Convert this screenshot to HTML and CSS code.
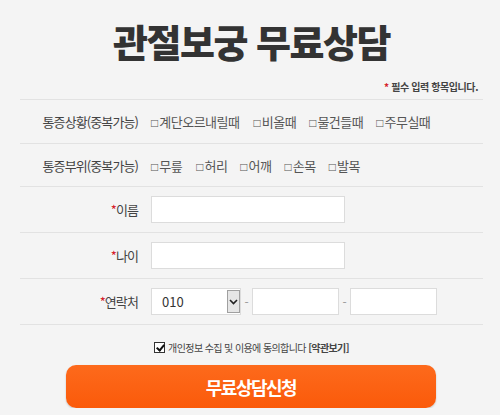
FILE: index.html
```html
<!DOCTYPE html>
<html lang="ko">
<head>
  <meta charset="UTF-8">
  <meta name="viewport" content="width=device-width, initial-scale=1.0">
  <title>관절보궁 무료상담</title>
  <link rel="stylesheet" href="styles.css">
</head>
<body>

<div class="wrap">
  <h1 class="title">관절보궁 무료상담</h1>
  <p class="req"><span class="star">*</span> 필수 입력 항목입니다.</p>

  <div class="form">
    <!-- 체크 항목 -->
    <div class="row check-row">
      <div class="label">통증상황(중복가능)</div>
      <div class="field checks">
        <span class="opt"><span class="box">□</span>계단오르내릴때</span>
        <span class="opt"><span class="box">□</span>비올때</span>
        <span class="opt"><span class="box">□</span>물건들때</span>
        <span class="opt"><span class="box">□</span>주무실때</span>
      </div>
    </div>
    <div class="row check-row">
      <div class="label">통증부위(중복가능)</div>
      <div class="field checks">
        <span class="opt"><span class="box">□</span>무릎</span>
        <span class="opt"><span class="box">□</span>허리</span>
        <span class="opt"><span class="box">□</span>어깨</span>
        <span class="opt"><span class="box">□</span>손목</span>
        <span class="opt"><span class="box">□</span>발목</span>
      </div>
    </div>

    <!-- 입력 항목 -->
    <div class="row">
      <label class="label" for="name"><span class="star">*</span>이름</label>
      <div class="field"><input type="text" id="name" class="text-input"></div>
    </div>
    <div class="row">
      <label class="label" for="age"><span class="star">*</span>나이</label>
      <div class="field"><input type="text" id="age" class="text-input"></div>
    </div>
    <div class="row">
      <label class="label" for="tel1"><span class="star">*</span>연락처</label>
      <div class="field phone">
        <span class="select-wrap">
          <select id="tel1" class="tel-select">
            <option>010</option>
            <option>011</option>
            <option>016</option>
            <option>017</option>
          </select>
          <span class="select-btn">
            <svg width="9" height="6" viewBox="0 0 9 6"><path d="M1 1 L4.5 4.5 L8 1" fill="none" stroke="#222" stroke-width="1.6"/></svg>
          </span>
        </span>
        <span class="dash">-</span>
        <input type="text" class="tel-input">
        <span class="dash">-</span>
        <input type="text" class="tel-input">
      </div>
    </div>
  </div>

  <div class="agree">
    <input type="checkbox" id="agree" class="agree-check" checked>
    <label for="agree">개인정보 수집 및 이용에 동의합니다 <b>[약관보기]</b></label>
  </div>

  <button class="submit">무료상담신청</button>
</div>

</body>
</html>
```

FILE: styles.css
```css
body {
  margin: 0;
  background-color: #f4f4f4;
  font-family: "Noto Sans CJK KR", "Noto Sans", sans-serif;
  color: #444;
}
.wrap {
  width: 463px;
  margin-left: 20px;
}
.title {
  margin: 0;
  padding-top: 18px;
  font-size: 38px;
  line-height: 46px;
  font-weight: 900;
  letter-spacing: -1.5px;
  text-align: center;
  color: #333;
}
.req {
  margin: 16px 5px 0 0;
  font-size: 10px;
  line-height: 14px;
  font-weight: bold;
  letter-spacing: -0.4px;
  text-align: right;
  color: #444;
}
.star {
  color: #d4202a;
}
.form {
  margin-top: 5px;
  border-top: 1px solid #e2e2e2;
}
.row {
  display: flex;
  align-items: center;
  gap: 13px;
  padding: 9px 0;
  border-bottom: 1px solid #e2e2e2;
}
.check-row {
  padding: 0;
  height: 43px;
}
.check-row + .check-row {
  height: 42px;
}
.label {
  width: 118px;
  flex-shrink: 0;
  text-align: right;
  font-size: 13px;
  letter-spacing: -0.9px;
  color: #444;
}
.checks {
  display: flex;
  gap: 13px;
  font-size: 13px;
  letter-spacing: -0.5px;
  color: #555;
}
.checks .opt:first-child {
  margin-right: 1px;
}
.box {
  font-family: "Liberation Sans", sans-serif;
  font-size: 12px;
  letter-spacing: 0;
  margin-right: 1px;
}
.text-input {
  width: 194px;
  height: 27px;
  box-sizing: border-box;
  border: 1px solid #dcdcdc;
  background: #fff;
  margin: 0;
  display: block;
}
.phone {
  display: flex;
  align-items: center;
}
.select-wrap {
  position: relative;
  display: block;
}
.tel-select {
  appearance: none;
  display: block;
  width: 90px;
  height: 27px;
  box-sizing: border-box;
  border: 1px solid #dcdcdc;
  background: #fff;
  padding-left: 10px;
  font-family: "Noto Sans CJK KR", sans-serif;
  font-size: 13px;
  color: #333;
  border-radius: 0;
}
.select-btn {
  position: absolute;
  top: 2px;
  right: 1px;
  width: 13px;
  height: 23px;
  box-sizing: border-box;
  border: 1px solid #a0a0a0;
  background: #e6e6e6;
  display: flex;
  align-items: center;
  justify-content: center;
  pointer-events: none;
}
.dash {
  width: 11px;
  text-align: center;
  font-size: 12px;
  color: #999;
}
.tel-input {
  width: 87px;
  height: 27px;
  box-sizing: border-box;
  border: 1px solid #dcdcdc;
  background: #fff;
  margin: 0;
}
.agree {
  display: flex;
  align-items: center;
  justify-content: center;
  gap: 3px;
  padding-top: 15px;
  height: 14px;
  font-size: 10px;
  letter-spacing: -0.6px;
  color: #444;
}
.agree-check {
  appearance: none;
  position: relative;
  width: 11px;
  height: 11px;
  margin: 0;
  border: 1px solid #333;
  background: #fff;
}
.agree-check:checked::after {
  content: "";
  position: absolute;
  left: 3px;
  top: 0;
  width: 3px;
  height: 6px;
  border: solid #111;
  border-width: 0 2px 2px 0;
  transform: rotate(40deg);
}
.submit {
  display: block;
  margin: 11px 0 0 46px;
  width: 370px;
  height: 43px;
  border: none;
  border-radius: 10px;
  background: linear-gradient(#fd6a1c, #fb5a0a);
  box-shadow: 0 1px 2px rgba(0, 0, 0, 0.2);
  color: #fff;
  font-family: "Noto Sans CJK KR", sans-serif;
  font-size: 18px;
  font-weight: bold;
  letter-spacing: -1.5px;
  cursor: pointer;
}
```
